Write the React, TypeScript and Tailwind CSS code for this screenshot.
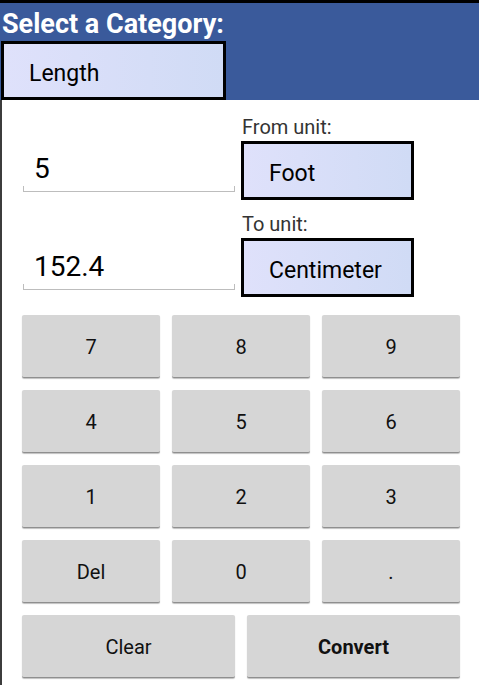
import React from "react"

const keys = [
  ["7", "8", "9"],
  ["4", "5", "6"],
  ["1", "2", "3"],
  ["Del", "0", "."],
]

function Spinner({ label, className }: { label: string; className: string }) {
  return (
    <div
      className={
        "flex h-[59px] items-center border-[3px] border-black bg-linear-to-r from-[#dfe1fb] to-[#d0dbf5] pl-[25px] pt-[7px] text-[23px] text-black " +
        className
      }
    >
      {label}
    </div>
  )
}

function NumberField({ value }: { value: string }) {
  return (
    <div className="flex h-full w-[212px] flex-col justify-end">
      <div className="pl-[11px] text-[28px] leading-[34px] text-black">{value}</div>
      <div className="h-[6px] border-x border-b border-[#bdbdbd]" />
    </div>
  )
}

function Key({ label, bold, className }: { label: string; bold?: boolean; className?: string }) {
  return (
    <button
      className={
        "flex h-[63px] items-center justify-center rounded-[2px] border-b border-[#8f8f8f] bg-[#d6d6d6] pt-[2px] text-[20px] text-[#111] shadow-[0_1px_1px_rgba(0,0,0,0.25)] " +
        (bold ? "font-bold " : "") +
        (className ?? "")
      }
    >
      {label}
    </button>
  )
}

export default function App() {
  return (
    <div className="flex h-[685px] w-[479px] flex-col bg-white font-['Roboto','Liberation_Sans',sans-serif]">
      <div className="h-[3px] bg-black" />
      <div className="flex h-[97px] flex-col bg-[#3a5a9b]">
        <div className="mt-[5px] pl-[2px] text-[27px] font-bold leading-[32px] text-white">
          Select a Category:
        </div>
        <Spinner label="Length" className="ml-[1px] mt-auto w-[225px]" />
      </div>

      <div className="flex flex-1 flex-col border-l-2 border-[#3c3c3c] pl-[20px] pr-[19px]">
        {/* from row */}
        <div className="flex h-[100px] items-end">
          <div className="ml-[1px] h-full pb-[8px]">
            <NumberField value="5" />
          </div>
          <div className="ml-[6px] flex w-[173px] flex-col">
            <div className="pl-[1px] text-[20px] leading-[24px] text-[#333]">From unit:</div>
            <Spinner label="Foot" className="mt-[2px]" />
          </div>
        </div>

        {/* to row */}
        <div className="flex h-[97px] items-end">
          <div className="ml-[1px] h-full pb-[7px]">
            <NumberField value="152.4" />
          </div>
          <div className="ml-[6px] flex w-[173px] flex-col">
            <div className="pl-[1px] text-[20px] leading-[24px] text-[#333]">To unit:</div>
            <Spinner label="Centimeter" className="mt-[2px]" />
          </div>
        </div>

        <div className="mt-[18px] flex flex-col gap-[12px]">
          {keys.map((row) => (
            <div key={row.join("")} className="grid grid-cols-3 gap-[12px]">
              {row.map((k) => (
                <Key key={k} label={k} />
              ))}
            </div>
          ))}
          <div className="grid grid-cols-2 gap-[12px]">
            <Key label="Clear" />
            <Key label="Convert" bold />
          </div>
        </div>
      </div>
    </div>
  )
}
